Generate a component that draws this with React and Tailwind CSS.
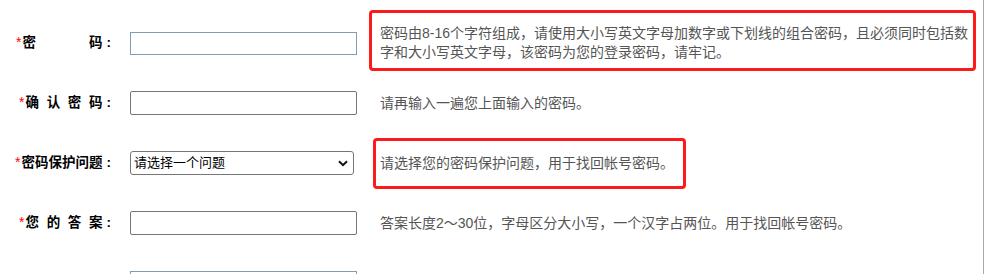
import React from 'react';

const FONT = "font-['Liberation_Sans','Noto_Sans_CJK_SC',sans-serif]";

// label characters spread across a fixed width, red asterisk in front
const Label = ({ chars, width }) => (
  <div className="flex items-center justify-end pr-[19px] text-[13.5px] font-bold text-black">
    <span className="mt-[-3px] mr-[1px] text-[14px] leading-none font-normal text-[#ff0000]">*</span>
    <span className="flex justify-between" style={width ? { width } : undefined}>
      {chars.map((c, i) => (
        <span key={i}>{c}</span>
      ))}
    </span>
    <span className="ml-[4px]">:</span>
  </div>
);

const Box = ({ className }) => (
  <div className={`pointer-events-none absolute rounded-[4px] border-[3px] border-[#fb1b1b] ${className}`} />
);

const Row = ({ label, field, hint, box }) => (
  <div className="grid h-[60px] grid-cols-[130px_250px_1fr] items-center">
    {label}
    <div>{field}</div>
    <div className="relative flex h-full items-center">
      {box}
      <p className="max-w-[596px] text-[14px] leading-[19px] text-[#555]">{hint}</p>
    </div>
  </div>
);

const rows = [
  {
    key: 'pwd',
    label: <Label chars={['密', '码']} width="80px" />,
    field: <input type="password" className="block h-[23px] w-[227px] border border-[#7f9db9] bg-white outline-none" />,
    hint: '密码由8-16个字符组成，请使用大小写英文字母加数字或下划线的组合密码，且必须同时包括数字和大小写英文字母，该密码为您的登录密码，请牢记。',
    box: <Box className="left-[-11px] right-[7px] top-[-3px] bottom-[2px]" />,
  },
  {
    key: 'confirm',
    label: <Label chars={['确', '认', '密', '码']} width="77px" />,
    field: <input type="password" className="block h-[24px] w-[227px] rounded-[2px] border border-[#767676] bg-white outline-none" />,
    hint: '请再输入一遍您上面输入的密码。',
  },
  {
    key: 'question',
    label: <Label chars={['密', '码', '保', '护', '问', '题']} />,
    field: (
      <div className="relative w-[224px]">
        <select className="block h-[24px] w-[224px] appearance-none rounded-[3px] border border-[#767676] bg-white pl-[3px] text-[13px] text-black outline-none">
          <option>请选择一个问题</option>
        </select>
        <svg className="pointer-events-none absolute right-[6px] top-[9px]" width="10" height="7" viewBox="0 0 10 7">
          <path d="M1 1.2 L5 5.2 L9 1.2" fill="none" stroke="#111" strokeWidth="2" />
        </svg>
      </div>
    ),
    hint: '请选择您的密码保护问题，用于找回帐号密码。',
    box: <Box className="left-[-7px] w-[313px] top-[5px] bottom-[4px]" />,
  },
  {
    key: 'answer',
    label: <Label chars={['您', '的', '答', '案']} width="77px" />,
    field: <input type="text" className="block h-[24px] w-[227px] rounded-[2px] border border-[#767676] bg-white outline-none" />,
    hint: '答案长度2～30位，字母区分大小写，一个汉字占两位。用于找回帐号密码。',
  },
  {
    key: 'next',
    label: <div />,
    field: <input type="text" className="block h-[24px] w-[227px] border border-[#7f9db9] bg-white outline-none" />,
    hint: '',
  },
];

export default function App() {
  return (
    <div className={`h-[274px] w-[984px] overflow-hidden border-r border-[#a8a8a8] bg-white ${FONT}`}>
      <div className="pt-[13px]">
        {rows.map((r) => (
          <Row key={r.key} label={r.label} field={r.field} hint={r.hint} box={r.box} />
        ))}
      </div>
    </div>
  );
}
